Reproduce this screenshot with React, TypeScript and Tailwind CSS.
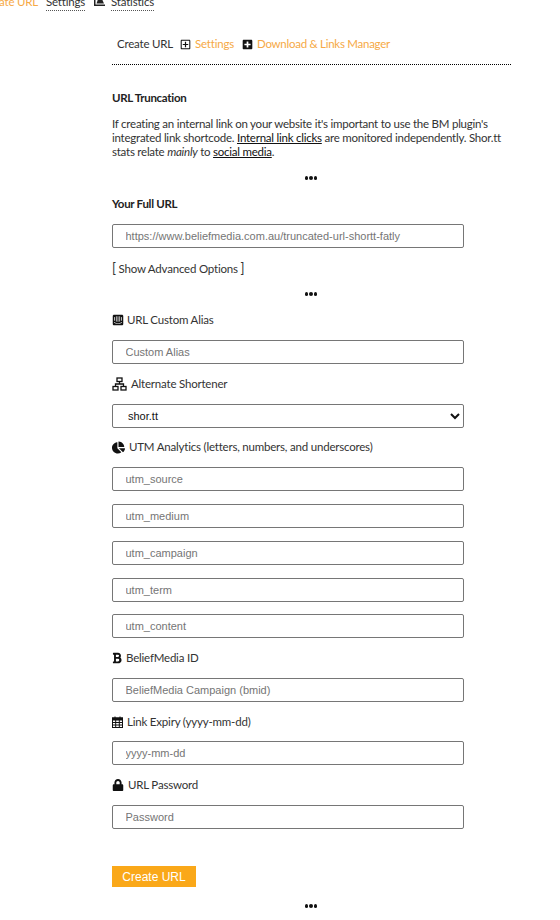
import React from "react";
import { FaIntercom, FaChartPie, FaBold, FaLock, FaRegPlusSquare, FaPlusSquare } from "react-icons/fa";

const font = "font-['Lato','Open_Sans',sans-serif]";

function Network() {
  return (
    <svg width="15" height="14" viewBox="0 0 15 14" fill="none" stroke="#111" strokeWidth="1.3" className="mr-[4px] shrink-0">
      <rect x="5" y="1" width="5" height="3.5" />
      <rect x="1" y="9.5" width="5" height="3.5" />
      <rect x="9" y="9.5" width="5" height="3.5" />
      <path d="M7.5 4.5V7M3.5 9.5V7H11.5V9.5" />
    </svg>
  );
}

function CalendarGrid() {
  return (
    <svg width="11" height="12" viewBox="0 0 11 12" fill="none" stroke="#111" strokeWidth="1" className="mr-[4px] shrink-0">
      <rect x="0.5" y="2" width="10" height="9.5" />
      <rect x="0.5" y="2" width="10" height="2" fill="#111" />
      <path d="M3 0.5V2.5M8 0.5V2.5M0.5 6.5H10.5M0.5 9H10.5M3.7 4V11.5M7.3 4V11.5" />
    </svg>
  );
}

function Dots({ className }: { className: string }) {
  return (
    <div className={`flex h-[6px] w-[398px] items-center justify-center gap-[1px] ${className}`}>
      <span className="h-[3.5px] w-[3.5px] rounded-full bg-[#111]" />
      <span className="h-[3.5px] w-[3.5px] rounded-full bg-[#111]" />
      <span className="h-[3.5px] w-[3.5px] rounded-full bg-[#111]" />
    </div>
  );
}

function Label({ icon, text, className }: { icon: React.ReactNode; text: string; className: string }) {
  return (
    <div className={`flex h-[16px] items-center text-[11.5px] leading-[16px] tracking-[-0.2px] text-[#333] ${className}`}>
      {icon}
      <span>{text}</span>
    </div>
  );
}

function Field({ placeholder, className = "" }: { placeholder: string; className?: string }) {
  return (
    <input
      placeholder={placeholder}
      className={`block h-[24px] w-[352px] rounded-[2px] border border-[#767676] bg-white px-[12.5px] font-['Liberation_Sans',sans-serif] text-[11px] text-[#333] outline-none placeholder:text-[#757575] ${className}`}
    />
  );
}

export default function App() {
  return (
    <div className={`h-[920px] w-[560px] overflow-hidden bg-white ${font}`}>
      <nav className="-ml-[18px] -mt-[6px] flex h-[16px] items-center text-[11.5px] leading-[16px] tracking-[-0.2px] text-[#333]">
        <span className="text-[#f6a945]">Create URL</span>
        <span className="ml-[8px] border-b border-dotted border-[#555]">Settings</span>
        <svg width="13" height="12" viewBox="0 0 13 12" className="ml-[8px] -mt-[3px]" fill="#222">
          <path d="M1 1h1.5v8.5H12V11H1z" />
          <path d="M3.5 8.5 5.5 3h3l2.5 5.5z" />
        </svg>
        <span className="ml-[5px] border-b border-dotted border-[#555]">Statistics</span>
      </nav>

      <div className="ml-[112px] w-[400px]">
        <div className="mt-[26px] ml-[5px] flex h-[16px] items-center text-[11.5px] leading-[16px] tracking-[-0.2px]">
          <span className="text-[#333]">Create URL</span>
          <FaRegPlusSquare className="ml-[7px] text-[11px] text-[#111]" />
          <span className="ml-[4px] text-[#f6a945]">Settings</span>
          <FaPlusSquare className="ml-[8px] text-[11px] text-[#111]" />
          <span className="ml-[4px] tracking-[-0.27px] text-[#f6a945]">Download &amp; Links Manager</span>
        </div>
        <div className="mt-[12px] h-0 w-[399px] border-t border-dotted border-black" />

        <h2 className="mt-[25px] text-[11.5px] font-bold leading-[16px] tracking-[-0.3px] text-[#222]">URL Truncation</h2>
        <p className="mt-[11px] w-[398px] text-[11.5px] leading-[14px] tracking-[-0.24px] text-[#333]">
          If creating an internal link on your website it's important to use the BM plugin's integrated link shortcode.{" "}
          <span className="text-[#111] underline">Internal link clicks</span> are monitored independently. Shor.tt stats relate{" "}
          <em>mainly</em> to <span className="text-[#111] underline">social media</span>.
        </p>
        <Dots className="mt-[16px]" />
        <h2 className="mt-[15px] text-[11.5px] font-bold leading-[16px] tracking-[-0.3px] text-[#222]">Your Full URL</h2>
        <Field placeholder="https://www.beliefmedia.com.au/truncated-url-shortt-fatly" className="mt-[12px]" />
        <div className="mt-[12px] text-[11.5px] leading-[16px] tracking-[-0.2px] text-[#333]">
          <span className="text-[13px]">[</span> Show Advanced Options <span className="text-[13px]">]</span>
        </div>
        <Dots className="mt-[14px]" />

        <Label className="mt-[15px]" text="URL Custom Alias" icon={<FaIntercom className="mr-[3px] text-[12px] text-[#111]" />} />
        <Field placeholder="Custom Alias" className="mt-[12px]" />
        <Label className="mt-[12px]" text="Alternate Shortener" icon={<Network />} />
        <select className="mt-[12px] block h-[24px] w-[352px] rounded-[2px] border border-[#767676] bg-white pl-[11px] font-['Liberation_Sans',sans-serif] text-[11px] text-[#111]">
          <option>shor.tt</option>
        </select>
        <Label className="mt-[11px]" text="UTM Analytics (letters, numbers, and underscores)" icon={<FaChartPie className="mr-[4px] text-[13px] text-[#111]" />} />
        <Field placeholder="utm_source" className="mt-[12px]" />
        <Field placeholder="utm_medium" className="mt-[13px]" />
        <Field placeholder="utm_campaign" className="mt-[13px]" />
        <Field placeholder="utm_term" className="mt-[13px]" />
        <Field placeholder="utm_content" className="mt-[12px]" />
        <Label className="mt-[12px]" text="BeliefMedia ID" icon={<FaBold className="-ml-[1px] mr-[3px] text-[12px] text-[#111]" />} />
        <Field placeholder="BeliefMedia Campaign (bmid)" className="mt-[12px]" />
        <Label className="mt-[12px]" text="Link Expiry (yyyy-mm-dd)" icon={<CalendarGrid />} />
        <Field placeholder="yyyy-mm-dd" className="mt-[11px]" />
        <Label className="mt-[12px]" text="URL Password" icon={<FaLock className="mr-[4px] text-[12px] text-[#111]" />} />
        <Field placeholder="Password" className="mt-[12px]" />
        <button className="mt-[37px] block h-[21px] w-[84px] bg-[#faa819] pt-[1px] font-['Liberation_Sans',sans-serif] text-[12px] text-white">
          Create URL
        </button>
        <Dots className="mt-[16px]" />
      </div>
    </div>
  );
}
